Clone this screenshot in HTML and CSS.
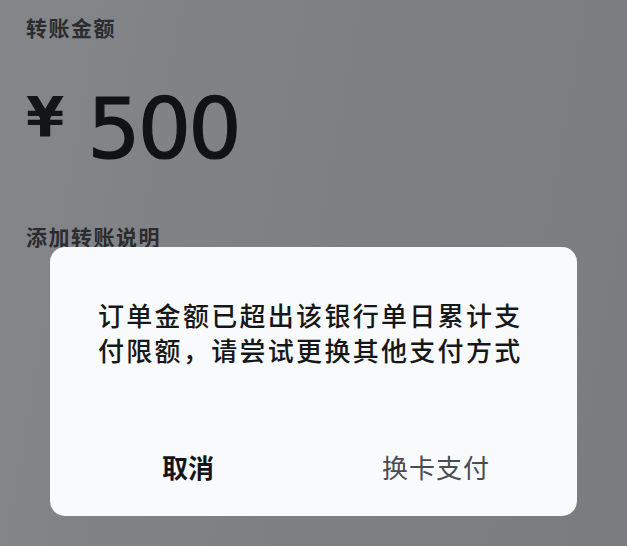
FILE: index.html
```html
<!DOCTYPE html>
<html lang="zh-CN">
<head>
<meta charset="utf-8">
<title>转账</title>
<link rel="stylesheet" href="styles.css">
</head>
<body>
<main class="page">
  <section class="amount">
    <h2 class="label">转账金额</h2>
    <div class="value">
      <span class="currency">¥</span>
      <span class="number">500</span>
    </div>
    <p class="label note">添加转账说明</p>
  </section>

  <div class="dialog" role="alertdialog">
    <p class="message">订单金额已超出该银行单日累计支付限额，请尝试更换其他支付方式</p>
    <div class="actions">
      <button class="action cancel">取消</button>
      <button class="action confirm">换卡支付</button>
    </div>
  </div>
</main>
</body>
</html>
```

FILE: styles.css
```css
* {
  box-sizing: border-box;
  margin: 0;
  padding: 0;
}

html, body {
  width: 627px;
  height: 546px;
  overflow: hidden;
}

body {
  background: #7d7f83;
  font-family: "Noto Sans CJK SC", "Noto Sans", sans-serif;
}

.page {
  position: relative;
  width: 627px;
  height: 546px;
  background: linear-gradient(100deg, #848689 0%, #7e8084 45%, #7a7c80 100%);
}

.amount {
  display: flex;
  flex-direction: column;
  padding: 12px 0 0 26px;
}

.label {
  font-size: 21px;
  line-height: 30px;
  font-weight: 700;
  letter-spacing: 1.5px;
  color: #2a2c30;
}

.value {
  display: flex;
  align-items: flex-start;
  margin-top: 38px;
  height: 100px;
}

.currency {
  font-family: "DejaVu Sans", sans-serif;
  font-weight: 700;
  font-size: 55px;
  line-height: 55px;
  color: #141517;
  margin-top: 10px;
}

.number {
  font-family: "DejaVu Sans", sans-serif;
  font-size: 84px;
  line-height: 84px;
  letter-spacing: -3px;
  color: #111214;
  margin-left: 23px;
  margin-top: 7px;
  -webkit-text-stroke: 1.2px #111214;
}

.note {
  margin-top: 41px;
}

.dialog {
  position: absolute;
  left: 50px;
  top: 247px;
  width: 527px;
  height: 269px;
  background: #f8fafc;
  border-radius: 15px;
  display: flex;
  flex-direction: column;
}

.message {
  padding: 50px 0 0 48px;
  font-size: 26px;
  line-height: 35px;
  font-weight: 500;
  letter-spacing: 2.3px;
  color: #16171a;
  width: 480px;
}

.actions {
  display: grid;
  grid-template-columns: 1fr 1fr;
  padding: 0 17px 0 14px;
  margin-top: auto;
  height: 92px;
}

.action {
  border: none;
  background: none;
  font-family: inherit;
  font-size: 26px;
  line-height: 30px;
  padding-bottom: 6px;
}

.cancel {
  font-weight: 700;
  color: #141518;
}

.confirm {
  font-weight: 400;
  color: #4a4c52;
  letter-spacing: 1px;
}
```
